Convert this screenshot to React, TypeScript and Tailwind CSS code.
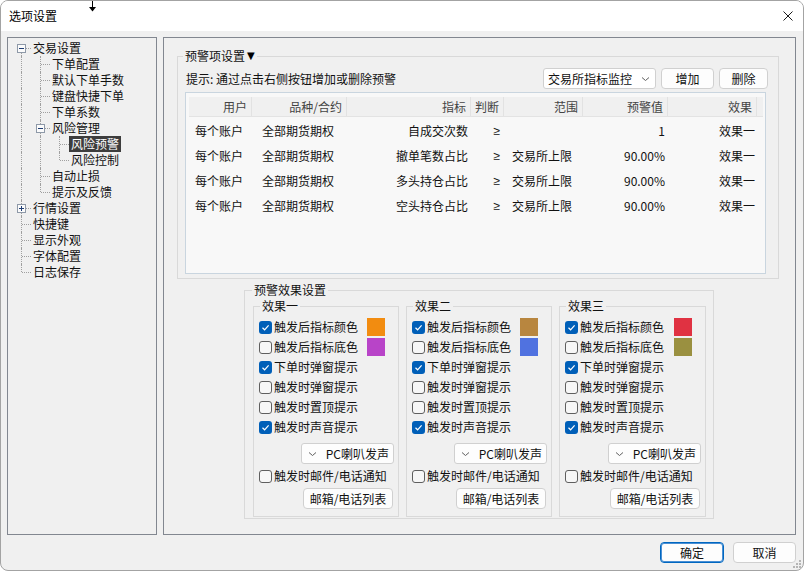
import React from "react";

type CellType = "v" | "t" | "e" | "f";

function Expander({ plus }: { plus?: boolean }) {
  return (
    <span className="absolute left-[5px] top-[4px] z-10 flex h-[9px] w-[9px] items-center justify-center border border-[#8e99a8] bg-[#fbfbfb]">
      <svg width="7" height="7" viewBox="0 0 7 7">
        <path d="M1 3.5H6" stroke="#1f3d73" strokeWidth="1" />
        {plus && <path d="M3.5 1V6" stroke="#1f3d73" strokeWidth="1" />}
      </svg>
    </span>
  );
}

function TreeCell({ type, exp }: { type: CellType; exp?: "minus" | "plus" }) {
  return (
    <div className="relative h-[16px] w-[19px] shrink-0">
      {(type === "v" || type === "t") && (
        <span className="absolute left-[9px] top-0 h-[16px] border-l border-dotted border-[#a0a0a0]" />
      )}
      {type === "e" && (
        <span className="absolute left-[9px] top-0 h-[8px] border-l border-dotted border-[#a0a0a0]" />
      )}
      {type === "f" && (
        <span className="absolute left-[9px] top-[8px] h-[8px] border-l border-dotted border-[#a0a0a0]" />
      )}
      {type !== "v" && (
        <span className="absolute left-[10px] top-[8px] w-[9px] border-t border-dotted border-[#a0a0a0]" />
      )}
      {exp && <Expander plus={exp === "plus"} />}
    </div>
  );
}

const tree: { cells: CellType[]; exp?: "minus" | "plus"; label: string; sel?: boolean }[] = [
  { cells: ["f"], exp: "minus", label: "交易设置" },
  { cells: ["v", "t"], label: "下单配置" },
  { cells: ["v", "t"], label: "默认下单手数" },
  { cells: ["v", "t"], label: "键盘快捷下单" },
  { cells: ["v", "t"], label: "下单系数" },
  { cells: ["v", "t"], exp: "minus", label: "风险管理" },
  { cells: ["v", "v", "t"], label: "风险预警", sel: true },
  { cells: ["v", "v", "e"], label: "风险控制" },
  { cells: ["v", "t"], label: "自动止损" },
  { cells: ["v", "e"], label: "提示及反馈" },
  { cells: ["t"], exp: "plus", label: "行情设置" },
  { cells: ["t"], label: "快捷键" },
  { cells: ["t"], label: "显示外观" },
  { cells: ["t"], label: "字体配置" },
  { cells: ["e"], label: "日志保存" },
];

const headers = ["用户", "品种/合约", "指标", "判断", "范围", "预警值", "效果"];
const rows = [
  ["每个账户", "全部期货期权", "自成交次数", "≥", "", "1", "效果一"],
  ["每个账户", "全部期货期权", "撤单笔数占比", "≥", "交易所上限", "90.00%", "效果一"],
  ["每个账户", "全部期货期权", "多头持仓占比", "≥", "交易所上限", "90.00%", "效果一"],
  ["每个账户", "全部期货期权", "空头持仓占比", "≥", "交易所上限", "90.00%", "效果一"],
];
const cellCls = [
  "pl-[6px] text-left",
  "pl-[10px] text-left",
  "pr-[3px] text-right",
  "pr-[4px] text-right font-['Liberation_Sans',sans-serif]",
  "pl-[8px] text-left",
  "pr-[3px] text-right",
  "pr-[2px] text-right",
];

function Check({ checked }: { checked?: boolean }) {
  if (checked) {
    return (
      <span className="flex h-[13px] w-[13px] shrink-0 items-center justify-center rounded-[3px] bg-[#005fb8]">
        <svg width="9" height="9" viewBox="0 0 9 9">
          <path d="M1.5 4.8L3.6 6.8L7.6 2.3" fill="none" stroke="#fff" strokeWidth="1.2" />
        </svg>
      </span>
    );
  }
  return <span className="h-[13px] w-[13px] shrink-0 rounded-[3px] border border-[#5f5f5f] bg-[#f7f7f7]" />;
}

function CheckRow({ checked, label, swatch }: { checked?: boolean; label: string; swatch?: string }) {
  return (
    <div className="flex h-[20px] items-center">
      <Check checked={checked} />
      <span className="ml-[2px] leading-[16px]">{label}</span>
      {swatch && <span className="ml-auto mr-[13px] h-[18px] w-[18px]" style={{ background: swatch }} />}
    </div>
  );
}

function EffectBox({ title, c1, c2, w }: { title: string; c1: string; c2: string; w: string }) {
  return (
    <div className={`relative h-[211px] shrink-0 border border-[#d9d9d9] ${w}`}>
      <span className="absolute left-[6px] top-[-9px] bg-[#f0f0f0] px-[2px] leading-[16px]">{title}</span>
      <div className="flex flex-col pl-[5px] pt-[10px]">
        <CheckRow checked label="触发后指标颜色" swatch={c1} />
        <CheckRow label="触发后指标底色" swatch={c2} />
        <CheckRow checked label="下单时弹窗提示" />
        <CheckRow label="触发时弹窗提示" />
        <CheckRow label="触发时置顶提示" />
        <CheckRow checked label="触发时声音提示" />
        <div className="mr-[4px] mt-[6px] flex h-[21px] w-[93px] items-center self-end rounded-[3px] border border-[#d0d0d0] bg-[#fdfdfd] pl-[6px] pr-[4px]">
          <svg width="9" height="6" viewBox="0 0 9 6">
            <path d="M1 1.5L4.5 4.5L8 1.5" fill="none" stroke="#606060" strokeWidth="1" />
          </svg>
          <span className="ml-auto leading-[16px]">PC喇叭发声</span>
        </div>
        <div className="mt-[2px]">
          <CheckRow label="触发时邮件/电话通知" />
        </div>
        <div className="mr-[5px] mt-[2px] flex h-[21px] w-[90px] items-center justify-center self-end rounded-[4px] border border-[#d0d0d0] bg-[#fdfdfd] leading-[16px]">
          邮箱/电话列表
        </div>
      </div>
    </div>
  );
}

export default function App() {
  return (
    <div className="relative h-[571px] w-[804px] overflow-hidden rounded-[8px] border border-[#a3a3a3] bg-[#f0f0f0] font-['Noto_Sans_CJK_SC','Microsoft_YaHei',sans-serif] text-[12px] text-[#111]">
      {/* title bar */}
      <div className="flex h-[30px] items-center justify-between bg-white pl-[8px] pr-[10px]">
        <span className="leading-[16px] text-[#000]">选项设置</span>
        <svg width="10" height="10" viewBox="0 0 10 10">
          <path d="M0.5 0.5L9.5 9.5M9.5 0.5L0.5 9.5" stroke="#1a1a1a" strokeWidth="1" />
        </svg>
      </div>
      {/* cursor */}
      <svg className="absolute left-[87px] top-0" width="10" height="12" viewBox="0 0 10 12">
        <path d="M4.5 0V7" stroke="#000" strokeWidth="1" />
        <path d="M1 6H8L4.5 10.5Z" fill="#000" />
      </svg>

      {/* content */}
      <div className="flex gap-[6px] pl-[6px] pr-[7px] pt-[6px]">
        {/* tree */}
        <div className="h-[498px] w-[150px] shrink-0 border border-[#828790] bg-[#f0f0f0] pl-[4px] pt-[2px]">
          {tree.map((n, i) => (
            <div key={i} className="flex h-[16px] items-center">
              {n.cells.map((c, j) => (
                <TreeCell key={j} type={c} exp={j === n.cells.length - 1 ? n.exp : undefined} />
              ))}
              <span
                className={`h-[16px] whitespace-nowrap px-[2px] leading-[16px] ${
                  n.sel ? "bg-[#3d3d3d] text-white" : "text-[#111]"
                }`}
              >
                {n.label}
              </span>
            </div>
          ))}
        </div>

        {/* right panel */}
        <div className="h-[498px] w-[633px] shrink-0 border border-[#828790] bg-[#f0f0f0] pl-[13px] pt-[18px]">
          {/* group 1 */}
          <div className="relative h-[223px] w-[602px] border border-[#d9d9d9]">
            <span className="absolute left-[5px] top-[-9px] flex items-center bg-[#f0f0f0] px-[2px] leading-[16px]">
              预警项设置
              <span className="ml-[2px] font-['DejaVu_Sans',sans-serif] text-[10px] leading-[16px] text-black">▼</span>
            </span>
            <div className="mt-[11px] flex h-[21px] items-center pl-[8px] pr-[10px]">
              <span className="leading-[16px]">提示: 通过点击右侧按钮增加或删除预警</span>
              <div className="ml-auto flex h-[21px] w-[113px] items-center rounded-[3px] border border-[#d0d0d0] bg-white pl-[4px] pr-[5px]">
                <span className="leading-[16px]">交易所指标监控</span>
                <svg className="ml-auto" width="9" height="6" viewBox="0 0 9 6">
                  <path d="M1 1.5L4.5 4.5L8 1.5" fill="none" stroke="#606060" strokeWidth="1" />
                </svg>
              </div>
              <div className="ml-[5px] flex h-[21px] w-[53px] items-center justify-center rounded-[4px] border border-[#d0d0d0] bg-[#fdfdfd] leading-[16px]">
                增加
              </div>
              <div className="ml-[5px] flex h-[21px] w-[49px] items-center justify-center rounded-[4px] border border-[#d0d0d0] bg-[#fdfdfd] leading-[16px]">
                删除
              </div>
            </div>
            {/* table */}
            <div className="ml-[7px] mt-[3px] h-[182px] w-[581px] border border-[#c9d5df] bg-[#f8f8f8] pl-[3px] pr-[2px] pt-[4px]">
              <div className="grid h-[20px] grid-cols-[63px_95px_124px_33px_79px_85px_89px_1fr] border-b border-[#e3e3e3] bg-[#f0f0f0] text-[#444]">
                {headers.map((h, i) => (
                  <div key={i} className="flex items-center justify-end whitespace-nowrap border-r border-[#e2e2e2] pr-[4px] leading-[16px]">
                    {h}
                  </div>
                ))}
                <div />
              </div>
              <div className="pt-[1px]">
                {rows.map((r, i) => (
                  <div key={i} className="grid h-[25px] grid-cols-[63px_95px_124px_33px_79px_85px_89px] items-center">
                    {r.map((c, j) => (
                      <div key={j} className={`whitespace-nowrap leading-[16px] ${cellCls[j]}`}>
                        {c}
                      </div>
                    ))}
                  </div>
                ))}
              </div>
            </div>
          </div>

          {/* group 2 */}
          <div className="relative ml-[67px] mt-[11px] h-[229px] w-[470px] border border-[#d9d9d9] pl-[8px] pt-[15px]">
            <span className="absolute left-[7px] top-[-9px] bg-[#f0f0f0] px-[2px] leading-[16px]">预警效果设置</span>
            <div className="flex gap-[7px]">
              <EffectBox title="效果一" c1="#f28c10" c2="#b844c8" w="w-[146px]" />
              <EffectBox title="效果二" c1="#b8863f" c2="#5072e0" w="w-[146px]" />
              <EffectBox title="效果三" c1="#e03242" c2="#9a9040" w="w-[147px]" />
            </div>
          </div>
        </div>
      </div>

      {/* bottom buttons */}
      <div className="mt-[7px] flex justify-end gap-[9px] pr-[7px]">
        <div className="flex h-[21px] w-[64px] items-center justify-center rounded-[4px] border border-[#0067c0] bg-[#fdfdfd] leading-[16px] shadow-[inset_0_0_0_1px_#4a8fd4]">
          确定
        </div>
        <div className="flex h-[21px] w-[63px] items-center justify-center rounded-[4px] border border-[#d0d0d0] bg-[#fdfdfd] leading-[16px]">
          取消
        </div>
      </div>

      {/* resize grip */}
      <svg className="absolute bottom-[1px] right-[1px]" width="10" height="10" viewBox="0 0 10 10">
        <rect x="7" y="1" width="2" height="2" fill="#b5b5b5" />
        <rect x="4" y="4" width="2" height="2" fill="#b5b5b5" />
        <rect x="7" y="4" width="2" height="2" fill="#b5b5b5" />
        <rect x="1" y="7" width="2" height="2" fill="#b5b5b5" />
        <rect x="4" y="7" width="2" height="2" fill="#b5b5b5" />
        <rect x="7" y="7" width="2" height="2" fill="#b5b5b5" />
      </svg>
    </div>
  );
}
